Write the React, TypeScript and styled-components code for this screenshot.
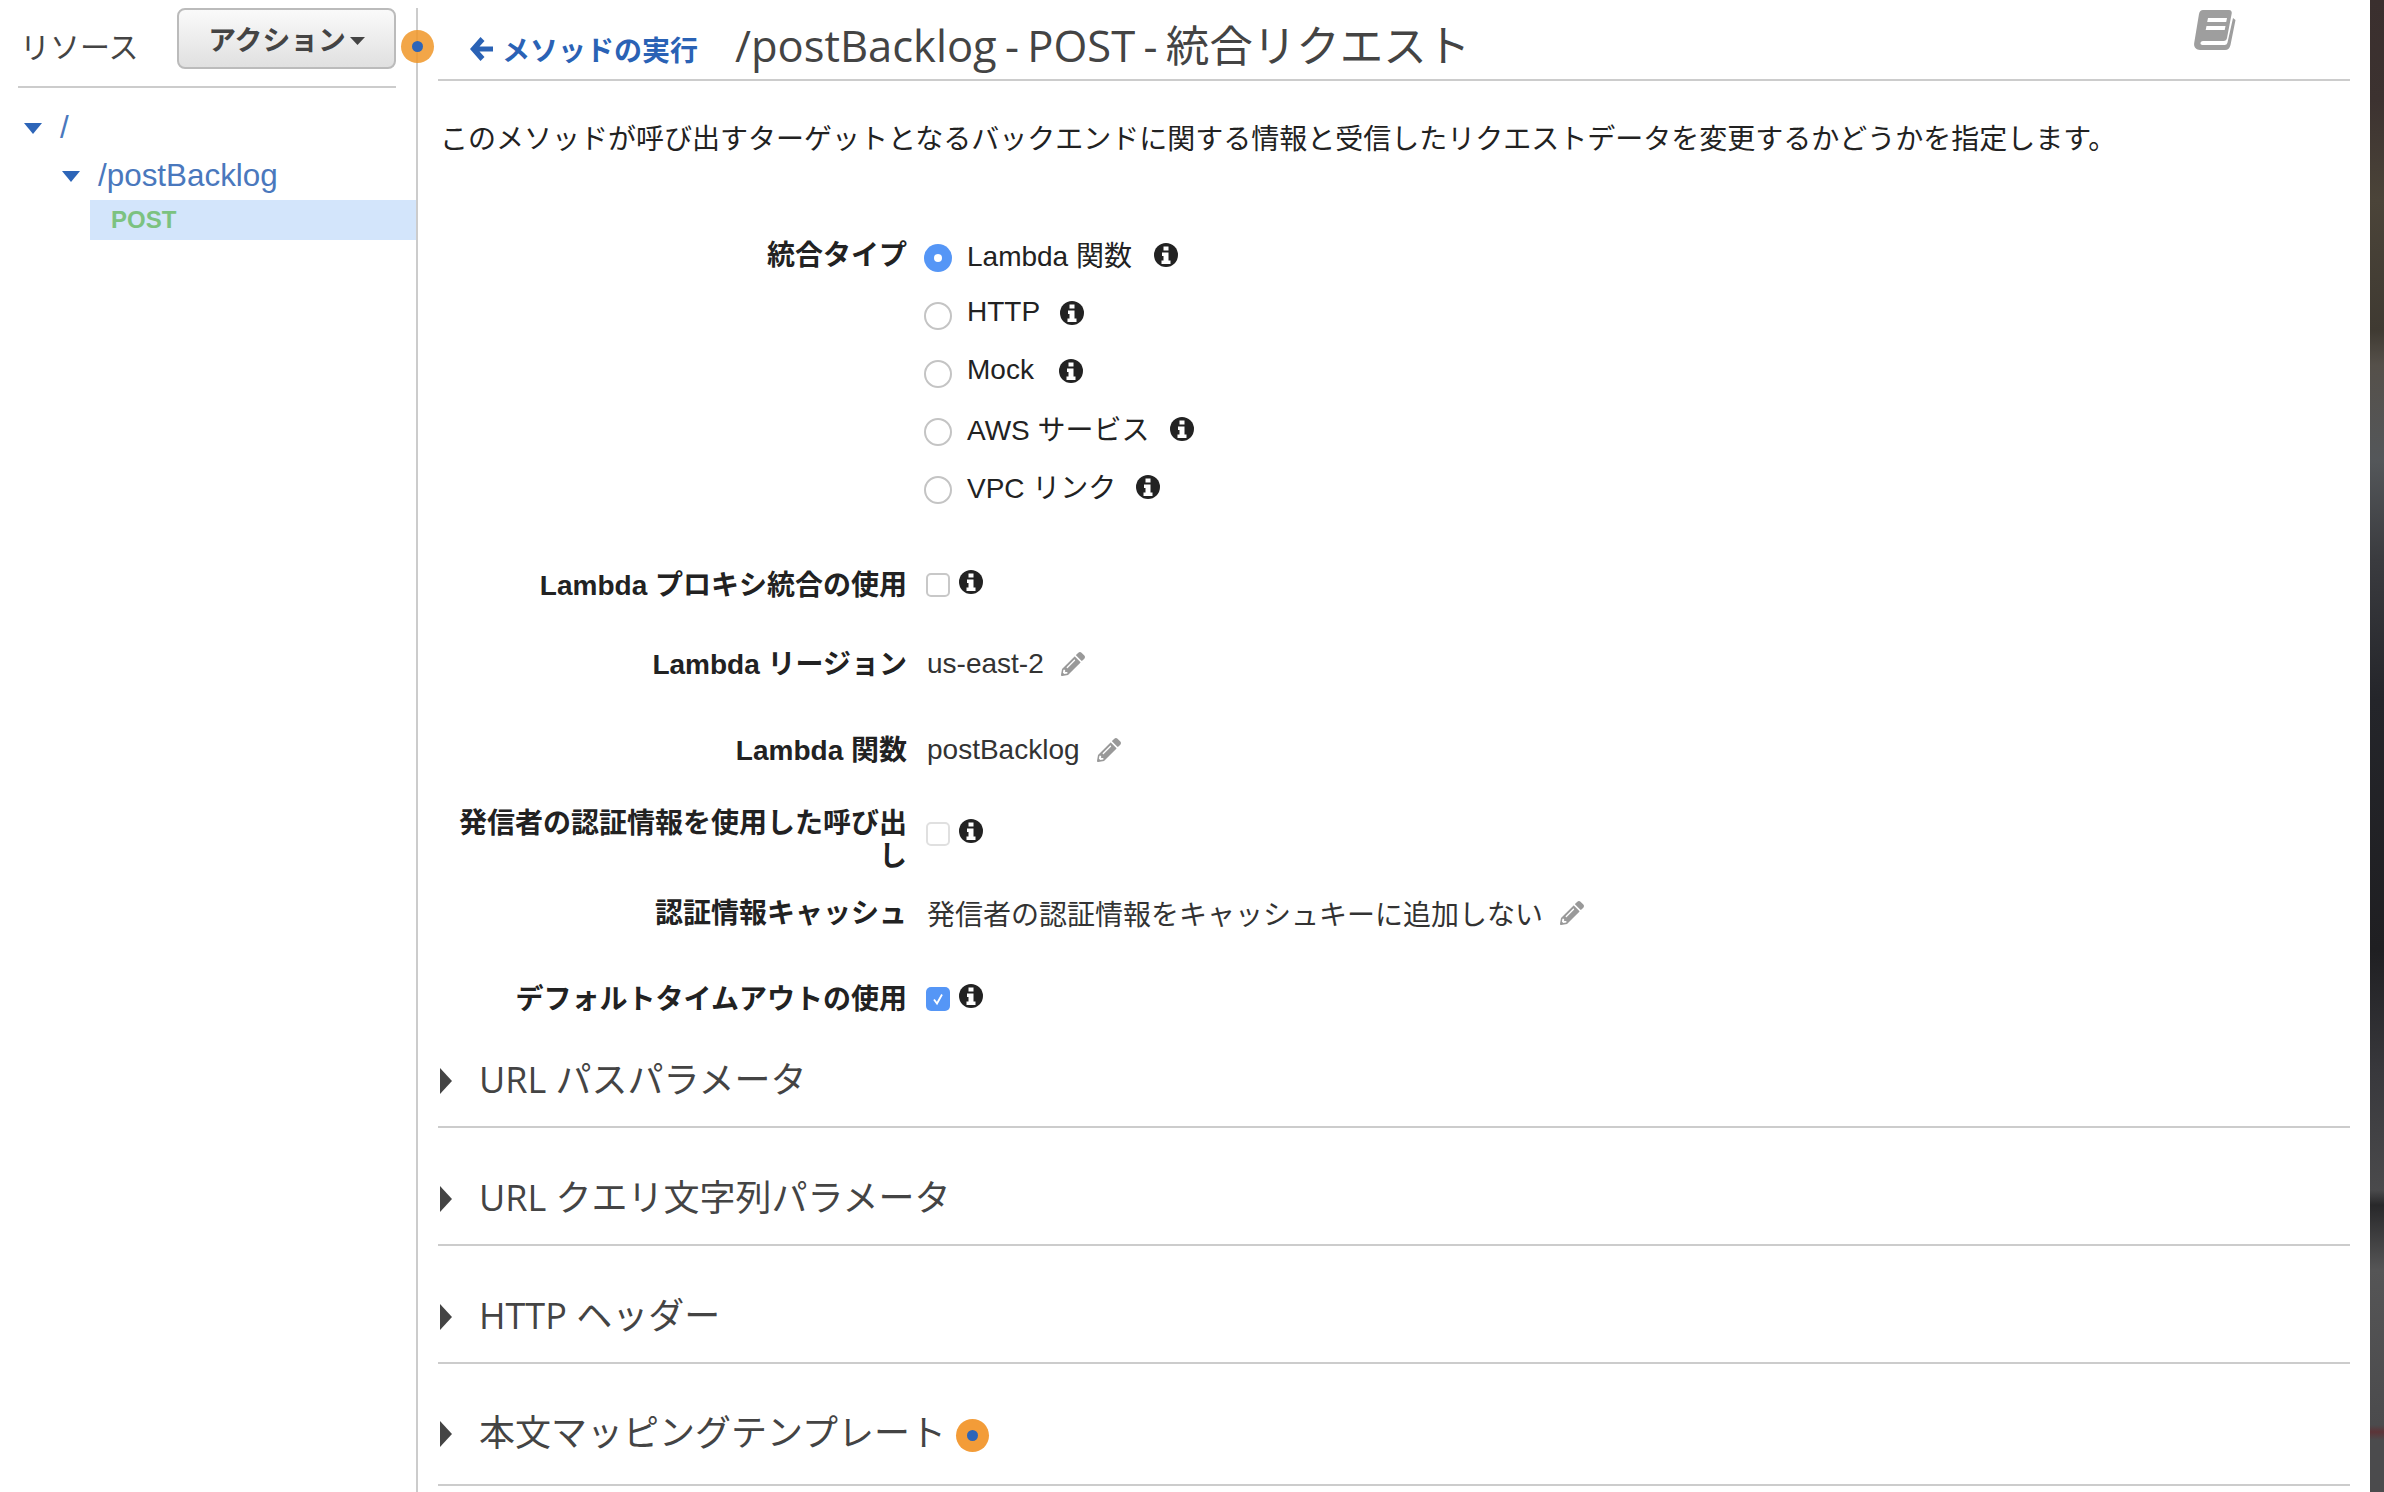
import React from 'react';
import styled, { createGlobalStyle } from 'styled-components';
import { FaPencilAlt } from 'react-icons/fa';

const GlobalStyle = createGlobalStyle`
  html, body {
    margin: 0;
    padding: 0;
    background: #fff;
    overflow: hidden;
  }
  body {
    font-family: "Liberation Sans", "Noto Sans CJK JP", sans-serif;
    color: #222;
  }
`;

const BODY_FONT = 28;

const Page = styled.div`
    width: 2384px;
    height: 1492px;
    display: flex;
    overflow: hidden;
  `,
  Sidebar = styled.aside`
    position: relative;
    width: 416px;
    margin-top: 8px;
    border-right: 2px solid #ccc;
    flex-shrink: 0;
  `,
  SidebarHead = styled.div`
    display: flex;
    align-items: center;
    justify-content: space-between;
    height: 80px;
    margin: 0 20px 0 18px;
    box-sizing: border-box;
    padding-bottom: 17px;
    border-bottom: 2px solid #ccc;
  `,
  SidebarTitle = styled.span`
    font-size: 30px;
    color: #444;
    padding: 13px 0 0 2px;
  `,
  ActionButton = styled.button`
    width: 219px;
    height: 61px;
    padding: 0 0 2px 0;
    border: 2px solid #bbb;
    border-radius: 8px;
    background: linear-gradient(#fafafa, #e0e0e0);
    color: #444;
    font-family: inherit;
    font-size: 27.8px;
    font-weight: 700;
    display: flex;
    align-items: center;
    justify-content: center;
    gap: 4px;
  `,
  ButtonCaret = styled.svg`
    margin: 6px 0 0 0;
    flex-shrink: 0;
  `,
  Tree = styled.div`
    padding-top: 16px;
  `,
  TreeRow = styled.div<{ $indent: number }>`
    display: flex;
    align-items: center;
    height: 48px;
    padding-left: ${(props) => props.$indent}px;
    gap: 18px;
    color: #4a78bd;
    font-size: 31.4px;
  `,
  MethodRow = styled.div`
    height: 40px;
    margin-left: 90px;
    padding-left: 21px;
    display: flex;
    align-items: center;
    background: #d3e5fb;
    color: #7cc280;
    font-size: 24px;
    font-weight: 700;
  `,
  Notice = styled.span<{ $over?: boolean }>`
    width: 33px;
    height: 33px;
    border-radius: 50%;
    background: ${(props) =>
      props.$over ? 'rgba(240, 150, 40, 0.85)' : '#f39c38'};
    display: inline-flex;
    align-items: center;
    justify-content: center;
    flex-shrink: 0;
    margin-top: ${(props) => (props.$over ? 0 : 4)}px;
    ${(props) =>
      props.$over ? 'position: absolute; top: 22px; right: -18px;' : ''}
    &::after {
      content: '';
      width: 11px;
      height: 11px;
      border-radius: 50%;
      background: #2d65b8;
    }
  `,
  Main = styled.main`
    flex: 1;
    min-width: 0;
    padding: 0 20px 0 20px;
    display: flex;
    flex-direction: column;
  `,
  Header = styled.header`
    height: 81px;
    box-sizing: border-box;
    border-bottom: 2px solid #ccc;
    display: flex;
    align-items: flex-end;
    padding: 0 114px 4px 32px;
  `,
  BackLink = styled.a`
    color: #2a62b5;
    font-size: 28px;
    font-weight: 700;
    display: flex;
    align-items: center;
    gap: 9px;
    margin: 0 37px 3px 0;
    height: 46px;
  `,
  BackArrow = styled.svg`
    width: 23px;
    height: 24px;
    flex-shrink: 0;
  `,
  Title = styled.h1`
    margin: 0;
    flex: 1;
    font-family: "Open Sans", "Noto Sans CJK JP", sans-serif;
    font-size: 43.5px;
    font-weight: 400;
    word-spacing: -3px;
    color: #444;
    line-height: 58px;
    white-space: nowrap;
  `,
  BookIcon = styled.svg`
    width: 42px;
    height: 40px;
    align-self: flex-start;
    margin-top: 10px;
    flex-shrink: 0;
  `,
  Description = styled.p`
    margin: 0;
    height: 145px;
    box-sizing: border-box;
    padding: 40px 0 0 2px;
    font-size: ${BODY_FONT}px;
    line-height: 38px;
    white-space: nowrap;
    color: #222;
  `,
  FormRow = styled.div<{ $height: number; $gap?: number }>`
    display: grid;
    grid-template-columns: 469px 1fr;
    column-gap: 20px;
    align-items: center;
    height: ${(props) => props.$height}px;
    margin-top: ${(props) => props.$gap || 0}px;
    font-size: ${BODY_FONT}px;
  `,
  Label = styled.label`
    font-weight: 700;
    text-align: right;
    line-height: 33px;
    color: #222;
  `,
  TopLabel = styled(Label)`
    align-self: start;
    padding-top: 13px;
  `,
  Value = styled.div<{ $lift?: number }>`
    display: flex;
    align-items: center;
    white-space: nowrap;
    color: #333;
    margin-bottom: ${(props) => props.$lift || 0}px;
  `,
  RadioList = styled.div`
    display: flex;
    flex-direction: column;
    align-self: start;
    margin: -1px 0 0 -3px;
  `,
  RadioRow = styled.div`
    display: flex;
    align-items: center;
    height: 58px;
    white-space: nowrap;
    color: #222;
  `,
  RadioMark = styled.span<{ $on?: boolean }>`
    width: 28px;
    height: 28px;
    box-sizing: border-box;
    border-radius: 50%;
    margin: 8px 15px 0 0;
    flex-shrink: 0;
    display: inline-flex;
    align-items: center;
    justify-content: center;
    border: ${(props) => (props.$on ? 'none' : '2px solid #c4c4c4')};
    background: ${(props) => (props.$on ? '#5596f6' : '#fff')};
    &::after {
      content: '';
      width: 8px;
      height: 8px;
      border-radius: 50%;
      background: ${(props) => (props.$on ? '#fff' : 'transparent')};
    }
  `,
  CheckMark = styled.span<{ $on?: boolean; $faint?: boolean }>`
    width: 24px;
    height: 24px;
    box-sizing: border-box;
    border-radius: 5px;
    margin: 0 9px 0 -1px;
    display: inline-flex;
    align-items: center;
    justify-content: center;
    flex-shrink: 0;
    border: ${(props) =>
      props.$on
        ? 'none'
        : props.$faint
          ? '2px solid #e0e0e0'
          : '2px solid #c8c8c8'};
    background: ${(props) => (props.$on ? '#5596f6' : '#fff')};
  `,
  CheckGlyph = styled.svg`
    width: 16px;
    height: 16px;
  `,
  InfoSvg = styled.svg<{ $left?: number; $top?: number }>`
    width: 24px;
    height: 24px;
    flex-shrink: 0;
    margin-left: ${(props) => props.$left || 0}px;
    margin-top: ${(props) => props.$top || 0}px;
  `,
  EditIcon = styled(FaPencilAlt)`
    width: 24px;
    height: 24px;
    margin-left: 17px;
    color: #999;
    flex-shrink: 0;
  `,
  Section = styled.section<{ $height: number; $pad: number }>`
    height: ${(props) => props.$height}px;
    box-sizing: border-box;
    border-bottom: 2px solid #ccc;
    display: flex;
    align-items: flex-end;
    gap: 27px;
    padding: 0 0 ${(props) => props.$pad}px 2px;
  `,
  SectionCaret = styled.span`
    display: flex;
    padding-bottom: 10px;
  `,
  SectionTitle = styled.h2`
    margin: 0;
    font-family: "Open Sans", "Noto Sans CJK JP", sans-serif;
    font-size: 36px;
    font-weight: 400;
    line-height: 48px;
    color: #444;
    display: flex;
    align-items: center;
    gap: 10px;
    white-space: nowrap;
  `,
  CaretSvg = styled.svg`
    flex-shrink: 0;
  `,
  WallpaperEdge = styled.div`
    width: 14px;
    flex-shrink: 0;
    background: linear-gradient(
      #3a2f2e 0,
      #3c3230 100px,
      #4b4439 200px,
      #3f3a32 330px,
      #55504a 365px,
      #54575a 460px,
      #3a3b3f 560px,
      #24252a 700px,
      #1f1f22 950px,
      #38383c 1070px,
      #4a4a4c 1190px,
      #28282a 1205px,
      #555556 1270px,
      #4b4b4d 1425px,
      #5c3438 1432px,
      #4b4b4d 1440px
    );
  `;

function Caret({ open, color }: { open?: boolean; color: string }) {
  if (open) {
    return (
      <CaretSvg width="18" height="11" viewBox="0 0 18 11">
        <path d="M0 0h18L9 11z" fill={color} />
      </CaretSvg>
    );
  }
  return (
    <CaretSvg width="12" height="26" viewBox="0 0 12 26">
      <path d="M0 0l12 13L0 26z" fill={color} />
    </CaretSvg>
  );
}

function InfoIcon({ left, top }: { left?: number; top?: number }) {
  return (
    <InfoSvg viewBox="0 0 24 24" $left={left} $top={top}>
      <circle cx="12" cy="12" r="12" fill="#222" />
      <path
        d="M9.500 3.500h5v4h-5zM8 9.500h6.500v8H16.500v3.500H7.500v-3.500h2v-4.500H8z"
        fill="#fff"
      />
    </InfoSvg>
  );
}

const radios = [
  { name: 'Lambda 関数', gap: 22, on: true },
  { name: 'HTTP', gap: 20 },
  { name: 'Mock', gap: 25 },
  { name: 'AWS サービス', gap: 20 },
  { name: 'VPC リンク', gap: 20 },
];

const sections = [
  { name: 'URL パスパラメータ', height: 102, pad: 22 },
  { name: 'URL クエリ文字列パラメータ', height: 118, pad: 22 },
  { name: 'HTTP ヘッダー', height: 118, pad: 22 },
  { name: '本文マッピングテンプレート', height: 122, pad: 27, notice: true },
];

export default function App(): JSX.Element {
  return (
    <Page>
      <GlobalStyle />
      <Sidebar>
        <SidebarHead>
          <SidebarTitle>リソース</SidebarTitle>
          <ActionButton>
            アクション
            <ButtonCaret width="15" height="8" viewBox="0 0 15 8">
              <path d="M0 0h15L7.500 8z" fill="#444" />
            </ButtonCaret>
          </ActionButton>
        </SidebarHead>
        <Notice $over />
        <Tree>
          <TreeRow $indent={24}>
            <Caret open color="#2d65b8" />
            /
          </TreeRow>
          <TreeRow $indent={62}>
            <Caret open color="#2d65b8" />
            /postBacklog
          </TreeRow>
          <MethodRow>POST</MethodRow>
        </Tree>
      </Sidebar>
      <Main>
        <Header>
          <BackLink>
            <BackArrow viewBox="0 0 23 24">
              <path
                d="M10.500 0l4 4-5 5.500H23v5H9.500l5 5.500-4 4L0 12z"
                fill="#2a62b5"
              />
            </BackArrow>
            メソッドの実行
          </BackLink>
          <Title>/postBacklog - POST - 統合リクエスト</Title>
          <BookIcon viewBox="0 0 42 40">
            <path
              d="M9 0h26c2 0 3 1.500 2.700 3.500L33 28c-.4 2-1.500 3-3.500 3H9c-3 0-3.500 4-.5 4h22c1.500 0 2.500-.8 3-2.500L39 8l2.500 2-5 25c-.6 3-2.500 5-5.500 5H6c-4 0-6.500-3-5.800-7L5 4c.5-2.500 2-4 4-4z"
              fill="#9e9e9e"
            />
            <path d="M14 8h19l-.8 4H13.200zM12.500 16h19l-.8 4h-19z" fill="#fff" />
          </BookIcon>
        </Header>
        <Description>
          このメソッドが呼び出すターゲットとなるバックエンドに関する情報と受信したリクエストデータを変更するかどうかを指定します。
        </Description>
        <FormRow $height={290}>
          <TopLabel>統合タイプ</TopLabel>
          <RadioList>
            {radios.map((radio) => (
              <RadioRow key={radio.name}>
                <RadioMark $on={radio.on} />
                {radio.name}
                <InfoIcon left={radio.gap} top={1} />
              </RadioRow>
            ))}
          </RadioList>
        </FormRow>
        <FormRow $height={54} $gap={42}>
          <Label>Lambda プロキシ統合の使用</Label>
          <Value>
            <CheckMark />
            <InfoIcon top={-6} />
          </Value>
        </FormRow>
        <FormRow $height={54} $gap={25}>
          <Label>Lambda リージョン</Label>
          <Value>
            us-east-2
            <EditIcon />
          </Value>
        </FormRow>
        <FormRow $height={54} $gap={32}>
          <Label>Lambda 関数</Label>
          <Value>
            postBacklog
            <EditIcon />
          </Value>
        </FormRow>
        <FormRow $height={66} $gap={30}>
          <Label>発信者の認証情報を使用した呼び出し</Label>
          <Value $lift={12}>
            <CheckMark $faint />
            <InfoIcon top={-6} />
          </Value>
        </FormRow>
        <FormRow $height={54} $gap={13}>
          <Label>認証情報キャッシュ</Label>
          <Value>
            発信者の認証情報をキャッシュキーに追加しない
            <EditIcon />
          </Value>
        </FormRow>
        <FormRow $height={54} $gap={32}>
          <Label>デフォルトタイムアウトの使用</Label>
          <Value>
            <CheckMark $on>
              <CheckGlyph viewBox="0 0 16 16">
                <path
                  d="M4 8.500l3 4 5-9"
                  fill="none"
                  stroke="#fff"
                  strokeWidth="1.800"
                />
              </CheckGlyph>
            </CheckMark>
            <InfoIcon top={-6} />
          </Value>
        </FormRow>
        {sections.map((section) => (
          <Section
            key={section.name}
            $height={section.height}
            $pad={section.pad}
          >
            <SectionCaret>
              <Caret color="#444" />
            </SectionCaret>
            <SectionTitle>
              {section.name}
              {section.notice && <Notice />}
            </SectionTitle>
          </Section>
        ))}
      </Main>
      <WallpaperEdge />
    </Page>
  );
}
